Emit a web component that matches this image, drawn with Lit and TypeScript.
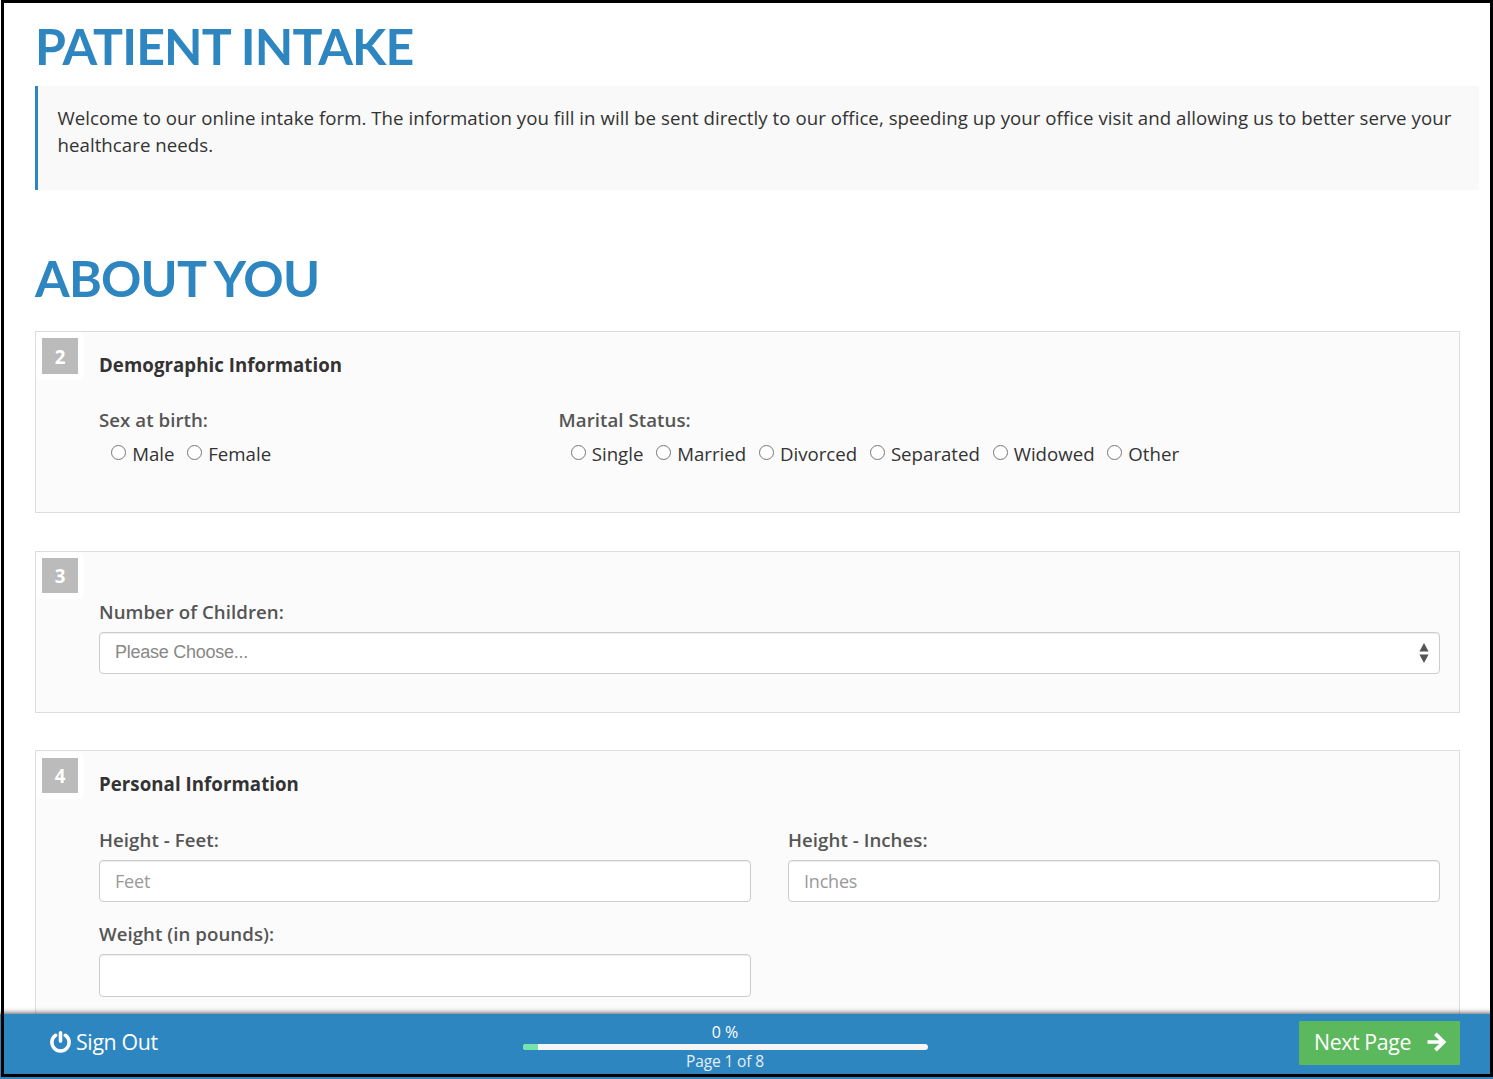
import { LitElement, html, css, nothing } from "lit";
import { customElement, property } from "lit/decorators.js";

const fieldText = css`
  .label {
    color: #555;
    font-weight: 600;
    line-height: 27px;
    height: 27px;
    white-space: nowrap;
  }
`;

@customElement("form-section")
class FormSection extends LitElement {
  @property() number = "";
  @property() heading = "";

  static styles = css`
    :host {
      display: block;
      box-sizing: border-box;
      position: relative;
      background: #fbfbfb;
      border: 1px solid #ddd;
      padding: 19px 19px 0 63px;
    }
    .badge {
      position: absolute;
      left: 0;
      top: var(--badge-top, 0px);
      box-sizing: border-box;
      width: 48px;
      height: var(--badge-height, 47px);
      border: 6px solid #fff;
      border-radius: 6px;
      background: #bbb;
      background-clip: padding-box;
      color: #fff;
      font-weight: 700;
      font-size: 18.67px;
      line-height: var(--badge-line, 35px);
      text-align: center;
    }
    .heading {
      margin: 0 0 28px;
      font-size: 18.67px;
      font-weight: 700;
      line-height: 27px;
      color: #333;
    }
  `;

  render() {
    return html`
      <div class="badge">${this.number}</div>
      ${this.heading ? html`<h3 class="heading">${this.heading}</h3>` : nothing}
      <slot></slot>
    `;
  }
}

@customElement("radio-group")
class RadioGroup extends LitElement {
  @property() label = "";
  @property({ attribute: false }) options: string[] = [];

  static styles = [
    fieldText,
    css`
      :host { display: block; }
      .options {
        display: flex;
        gap: 12.6px;
        padding-left: 12px;
        margin-top: 7px;
        letter-spacing: 0;
      }
      .option {
        display: flex;
        gap: 6.15px;
        line-height: 27px;
        white-space: nowrap;
      }
      .radio {
        appearance: none;
        box-sizing: border-box;
        width: 15px;
        height: 15px;
        margin: 5px 0 0;
        border: 1px solid #767676;
        border-radius: 50%;
        background: #fff;
      }
    `,
  ];

  render() {
    return html`
      <div class="label">${this.label}</div>
      <div class="options">
        ${this.options.map(
          (o) => html`<label class="option"><input class="radio" type="radio" name="choice" />${o}</label>`,
        )}
      </div>
    `;
  }
}

@customElement("text-field")
class TextField extends LitElement {
  @property() label = "";
  @property() hint = "";

  static styles = [
    fieldText,
    css`
      :host { display: block; }
      .input {
        display: block;
        box-sizing: border-box;
        width: 100%;
        height: var(--input-height, 42px);
        margin-top: 7px;
        padding: 0 15px;
        border: 1px solid #ccc;
        border-radius: 4px;
        background: #fff;
        box-shadow: inset 0 1px 1px rgba(0, 0, 0, 0.075);
        font: 18px "Open Sans", sans-serif;
        letter-spacing: -0.2px;
        color: #555;
      }
      .input::placeholder { color: #999; opacity: 1; }
    `,
  ];

  render() {
    return html`
      <div class="label">${this.label}</div>
      <input class="input" type="text" placeholder=${this.hint} />
    `;
  }
}

@customElement("select-field")
class SelectField extends LitElement {
  @property() label = "";
  @property() value = "";

  static styles = [
    fieldText,
    css`
      :host { display: block; }
      .select {
        display: flex;
        align-items: center;
        justify-content: space-between;
        box-sizing: border-box;
        height: 42px;
        margin-top: 7px;
        padding: 0 10px 0 15px;
        border: 1px solid #ccc;
        border-radius: 4px;
        background: #fff;
        box-shadow: inset 0 1px 1px rgba(0, 0, 0, 0.075);
      }
      .value {
        font: 18px/38px "Liberation Sans", sans-serif;
        letter-spacing: -0.25px;
        color: #888;
        padding-bottom: 2px;
      }
      .arrows { display: block; }
    `,
  ];

  render() {
    return html`
      <div class="label">${this.label}</div>
      <div class="select" role="combobox" aria-expanded="false" tabindex="0">
        <span class="value">${this.value}</span>
        <svg class="arrows" width="10" height="20" viewBox="0 0 10 20" fill="#555">
          <path d="M5 0L9.6 8.5H.4zM.4 11.5H9.6L5 20z" />
        </svg>
      </div>
    `;
  }
}

@customElement("intake-footer")
class IntakeFooter extends LitElement {
  @property({ type: Number }) page = 1;
  @property({ type: Number }) pages = 8;

  static styles = css`
    :host {
      position: relative;
      box-sizing: border-box;
      display: grid;
      grid-template-columns: 523px 405px 1fr;
      height: 65px;
      padding-right: 33px;
      background: #2e86c1;
      box-shadow: 0 0 5px 1px rgba(0, 0, 0, 0.65);
      color: #fff;
      letter-spacing: 0;
    }
    .signout {
      display: flex;
      align-items: flex-start;
      gap: 5px;
      padding: 14px 0 0 50px;
      font-size: 21.33px;
      letter-spacing: -0.35px;
      line-height: 28px;
    }
    .power { display: block; margin-top: 3px; }
    .progress {
      display: flex;
      flex-direction: column;
      align-items: center;
      padding-top: 7px;
      font-size: 16px;
      line-height: 23px;
    }
    .percent { margin-right: 1px; }
    .track {
      width: 405px;
      height: 6px;
      border-radius: 3px;
      background: #f5f5f5;
      overflow: hidden;
    }
    .fill {
      width: 15px;
      height: 6px;
      background: #76e3ac;
    }
    .page {
      margin-right: 1px;
      font-size: 15.5px;
      letter-spacing: -0.12px;
      line-height: 22px;
      color: #e4eff7;
    }
    .next {
      justify-self: end;
      box-sizing: border-box;
      display: flex;
      align-items: center;
      justify-content: space-between;
      width: 161px;
      height: 44px;
      margin-top: 7px;
      padding: 0 13px 2px 15px;
      border: 0;
      border-radius: 1px;
      background: #5cb85c;
      color: #fff;
      font: 21.33px/28px "Open Sans", sans-serif;
      letter-spacing: -0.4px;
      white-space: nowrap;
    }
    .arrow { display: block; flex: none; }
  `;

  render() {
    return html`
      <div class="signout">
        <svg class="power" width="21" height="22" viewBox="0 0 21 22" fill="none" stroke="#fff" stroke-linecap="round">
          <path d="M5.6 4.3a8.6 8.6 0 1 0 9.8 0" stroke-width="3.6" />
          <path d="M10.5 1.9v8.2" stroke-width="3.6" />
        </svg>
        <span>Sign Out</span>
      </div>
      <div class="progress">
        <div class="percent">0 %</div>
        <div class="track"><div class="fill"></div></div>
        <div class="page">Page ${this.page} of ${this.pages}</div>
      </div>
      <button class="next">
        Next Page
        <svg class="arrow" width="20" height="20" viewBox="0 0 20 20" fill="none" stroke="#fff" stroke-width="3.7">
          <path d="M.5 10H16.5M8.4 1.9L16.7 10L8.4 18.1" />
        </svg>
      </button>
    `;
  }
}

@customElement("app-root")
class AppRoot extends LitElement {
  static styles = css`
    :host {
      display: flex;
      flex-direction: column;
      position: relative;
      width: 1493px;
      height: 1079px;
      overflow: hidden;
      background: #fff;
      color: #333;
      font-family: "Open Sans", sans-serif;
      font-size: 18.67px;
      letter-spacing: 0.047px;
    }
    .frame {
      position: absolute;
      left: 1px;
      top: 0;
      right: 0;
      bottom: 2px;
      box-sizing: border-box;
      border: 3px solid #000;
      pointer-events: none;
    }
    .content {
      box-sizing: border-box;
      height: 1014px;
      overflow: hidden;
      padding: 16px 33px 0 35px;
    }
    .title {
      margin: 0;
      height: 60px;
      line-height: 60px;
      font-family: Lato, sans-serif;
      font-size: 50px;
      font-weight: 700;
      letter-spacing: -0.82px;
      color: #2e86c1;
      white-space: nowrap;
    }
    .intro {
      box-sizing: border-box;
      height: 104px;
      margin: 10px -19px 58px 0;
      padding: 18px 20px 18px 19.5px;
      border-left: 3px solid #2e86c1;
      background: #f9f9f9;
      line-height: 27px;
      letter-spacing: 0.043px;
    }
    .demographics {
      height: 182px;
      margin-top: 23px;
      --badge-height: 48px;
      --badge-line: 37px;
    }
    .children { height: 162px; margin-top: 38px; padding-top: 46px; }
    .personal { height: 400px; margin-top: 37px; --badge-top: 1px; }
    .split { display: grid; grid-template-columns: 459.6px 1fr; }
    .halves {
      display: grid;
      grid-template-columns: 1fr 1fr;
      gap: 18px 37px;
      margin-top: 29px;
    }
    .weight { --input-height: 43px; }
  `;

  render() {
    return html`
      <main class="content">
        <h1 class="title">PATIENT INTAKE</h1>
        <div class="intro">
          Welcome to our online intake form. The information you fill in will be sent directly to our office,
          speeding up your office visit and allowing us to better serve your healthcare needs.
        </div>
        <h2 class="title">ABOUT YOU</h2>
        <form-section class="demographics" number="2" heading="Demographic Information">
          <div class="split">
            <radio-group label="Sex at birth:" .options=${["Male", "Female"]}></radio-group>
            <radio-group
              label="Marital Status:"
              .options=${["Single", "Married", "Divorced", "Separated", "Widowed", "Other"]}
            ></radio-group>
          </div>
        </form-section>
        <form-section class="children" number="3">
          <select-field label="Number of Children:" value="Please Choose..."></select-field>
        </form-section>
        <form-section class="personal" number="4" heading="Personal Information">
          <div class="halves">
            <text-field label="Height - Feet:" hint="Feet"></text-field>
            <text-field label="Height - Inches:" hint="Inches"></text-field>
            <text-field class="weight" label="Weight (in pounds):"></text-field>
          </div>
        </form-section>
      </main>
      <intake-footer page="1" pages="8"></intake-footer>
      <div class="frame"></div>
    `;
  }
}
